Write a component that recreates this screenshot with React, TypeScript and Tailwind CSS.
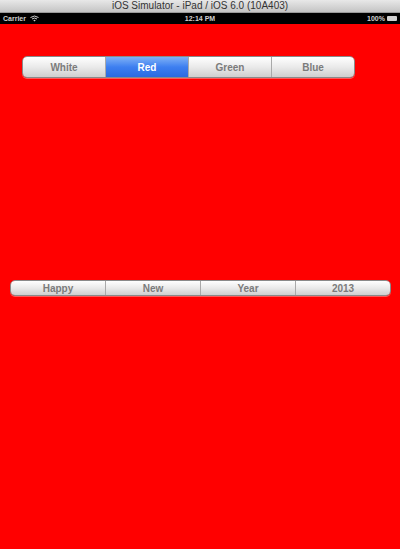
import React from 'react';

const font = { fontFamily: '"Liberation Sans", Arial, sans-serif' };

function Segmented({ items, selected, className, text }: { items: string[]; selected?: number; className: string; text: string }) {
    return (
        <div className={`flex overflow-hidden rounded-[5px] border border-[#8a8a8a] shadow-[0_1px_0_rgba(255,255,255,0.35)] ${className}`}>
            {items.map((label, i) => (
                <div
                    key={label}
                    className={`flex flex-1 items-center justify-center font-bold ${text} ${i > 0 ? 'border-l border-[#a9a9a9]' : ''} ${
                        i === selected
                            ? 'bg-gradient-to-b from-[#7fb0f5] via-[#3d7ff0] to-[#2b6ae0] text-white border-[#2a5cb8]'
                            : 'bg-gradient-to-b from-[#ffffff] via-[#eaeaea] to-[#cfcfcf] text-[#7b7b7b]'
                    }`}
                >
                    {label}
                </div>
            ))}
        </div>
    );
}

export default function App() {
    return (
        <div className="w-[400px] h-[549px] flex flex-col bg-[#ff0000]" style={font}>
            <div className="h-[13px] bg-gradient-to-b from-[#e8e8e8] to-[#c4c4c4] border-b border-[#9a9a9a] flex items-center justify-center text-[10px] leading-none text-[#333]">
                iOS Simulator - iPad / iOS 6.0 (10A403)
            </div>
            <div className="h-[11px] bg-black flex items-center justify-between px-[3px] text-[7px] font-bold text-[#d0d0d0] leading-none">
                <div className="flex items-center gap-[4px] w-[60px]">
                    <span>Carrier</span>
                    <svg width="9" height="7" viewBox="0 0 9 7">
                        <path d="M0.5 2.5 Q4.5 -0.5 8.5 2.5" stroke="#d0d0d0" strokeWidth="1" fill="none" />
                        <path d="M2 4 Q4.5 2 7 4" stroke="#d0d0d0" strokeWidth="1" fill="none" />
                        <path d="M4.5 6.5 L3.3 5.2 Q4.5 4.4 5.7 5.2 Z" fill="#d0d0d0" />
                    </svg>
                </div>
                <span>12:14 PM</span>
                <div className="flex items-center justify-end gap-[2px] w-[60px]">
                    <span>100%</span>
                    <div className="w-[10px] h-[5px] bg-[#d0d0d0] rounded-[1px]" />
                </div>
            </div>
            <div className="pt-[32px] pl-[22px]">
                <Segmented items={['White', 'Red', 'Green', 'Blue']} selected={1} className="w-[333px] h-[22px]" text="text-[10px]" />
            </div>
            <div className="pt-[202px] pl-[10px]">
                <Segmented items={['Happy', 'New', 'Year', '2013']} className="w-[381px] h-[16px]" text="text-[10px]" />
            </div>
        </div>
    );
}
